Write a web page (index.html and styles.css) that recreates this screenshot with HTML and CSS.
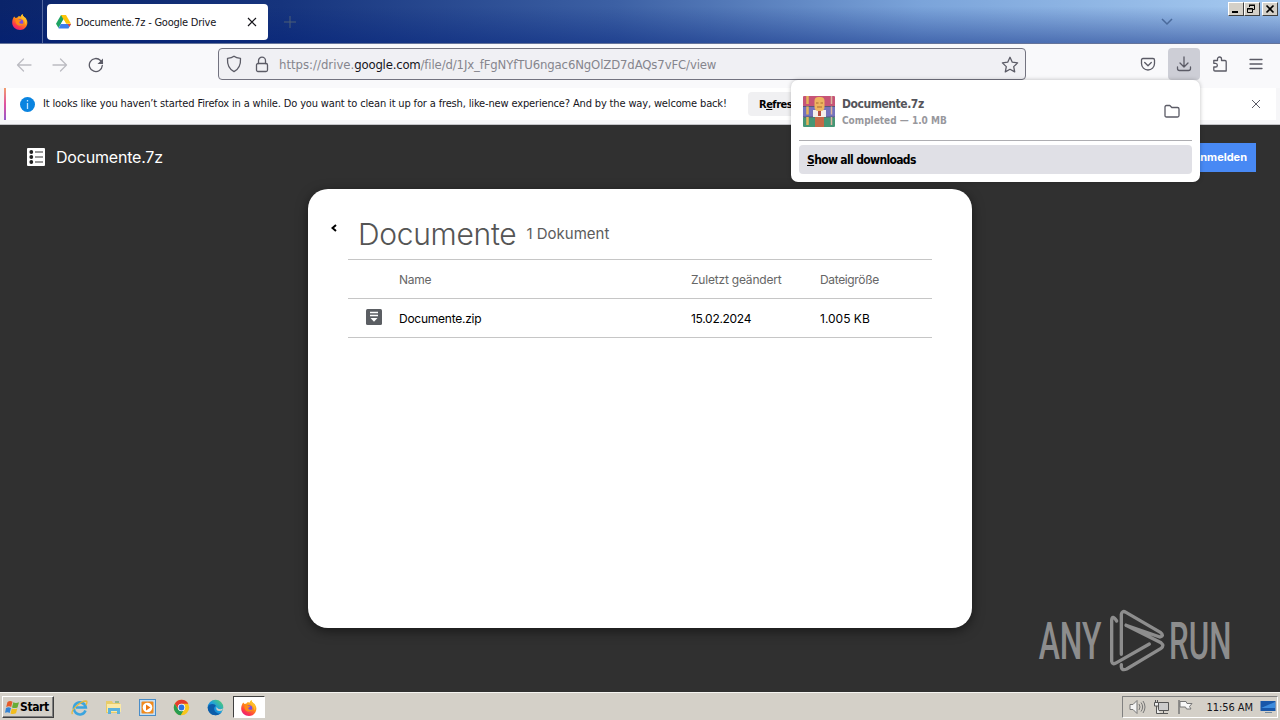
FILE: index.html
```html
<!DOCTYPE html>
<html lang="en">
<head>
  <meta charset="UTF-8" />
  <meta name="viewport" content="width=device-width, initial-scale=1.0">
  <title>Documente.7z - Google Drive</title>
  <link rel="stylesheet" href="styles.css">
</head>
<body>

  <!-- shared gradients and the firefox logo -->
  <svg class="defs" width="0" height="0">
    <defs>
      <linearGradient id="fox" x1="0.8" y1="0" x2="0.2" y2="1">
        <stop offset="0" stop-color="#ffe226" />
        <stop offset="0.45" stop-color="#ff8a16" />
        <stop offset="0.75" stop-color="#ff3b47" />
        <stop offset="1" stop-color="#e31587" />
      </linearGradient>
      <linearGradient id="edge" x1="0" y1="1" x2="1" y2="0">
        <stop offset="0" stop-color="#0c59a4" />
        <stop offset="0.5" stop-color="#1b9de2" />
        <stop offset="1" stop-color="#5bd65b" />
      </linearGradient>
      <symbol id="firefox" viewBox="0 0 16 16">
        <path fill="url(#fox)" d="M2.2 2.6 3.6 4 5.4 3.4C6.4 2.6 7 1.8 7.4 2.2L8.4 2.8C8.8 1.6 9.6.7 10.4 0c.2 1.7 1.2 2.3 2 3.2 1 .4 1.6 1 2 2 1.400 2.500 1.300 5-.1 7.200C12.800 14.700 10.600 16 8 16 3.800 16 .4 13 .2 9 .1 6.500 1 4.100 2.200 2.600z" />
        <path fill="#ffbd2e" d="M10.400 0c.2 1.700 1.200 2.300 2 3.200 2 2 2.400 5.400.8 7.500.2-3-.8-5.300-3.700-7C9.300 2.400 9.600 1 10.400 0z" />
        <circle cx="8" cy="8.600" r="3.300" fill="#7a4ce0" />
        <path fill="#ff8a16" d="M3.600 5.200c1.700-.7 3 .1 4.100.9l1.700.2c-.4 1-1.600 1-2.100 1.700-.2.800.6 1.800 2 1.700 1.200 0 2-.5 2.500-.2-1 2.600-5 3-7 .9C3.600 9 3.100 6.700 3.600 5.200z" />
      </symbol>
    </defs>
  </svg>

  <header class="titlebar">
    <div class="pinned">
      <svg width="16" height="16"><use href="#firefox" /></svg>
    </div>
    <div class="tab">
      <svg width="15" height="14" viewBox="0 0 15 14">
        <path fill="#1ea362" d="M5 0h5L2.500 13 0 8.700z" />
        <path fill="#fdc40a" d="M5 0h5l5 8.700h-5z" />
        <path fill="#3b7ded" d="M4.800 9H15l-2.500 4.600h-10z" />
        <path fill="#ea4335" d="M11.500 9H15l-1.500 2.700z" />
        <path fill="#fff" d="m7.500 4.500 2.500 4.300H5z" />
      </svg>
      <span class="tab-title">Documente.7z - Google Drive</span>
      <svg class="tab-close" width="10" height="10" viewBox="0 0 10 10"><path d="m1 1 8 8M9 1 1 9" /></svg>
    </div>
    <svg class="new-tab" width="12" height="12" viewBox="0 0 12 12"><path d="M6 0v12M0 6h12" /></svg>
    <svg class="list-tabs" width="12" height="8" viewBox="0 0 12 8"><path d="m1 1 5 5 5-5" /></svg>
    <div class="window-buttons">
      <button><svg width="12" height="10" viewBox="0 0 12 10"><path d="M2 8h6" stroke="#000" stroke-width="2" /></svg></button>
      <button><svg width="12" height="10" viewBox="0 0 12 10"><path d="M3.500 3V1.500h5v4H7M3.500 1.500h5M1.500 4.500h5v4h-5zM1 5h6M3 1h6" fill="none" stroke="#000" /></svg></button>
      <button class="win-close"><svg width="12" height="10" viewBox="0 0 12 10"><path d="m2.500 1.500 7 7m0-7-7 7" stroke="#000" stroke-width="1.700" /></svg></button>
    </div>
  </header>

  <nav class="toolbar">
    <svg class="nav-icon faded back" width="16" height="16" viewBox="0 0 16 16"><path d="M15 8H1.500M7.500 2l-6 6 6 6" /></svg>
    <svg class="nav-icon faded forward" width="16" height="16" viewBox="0 0 16 16"><path d="M1 8h13.500M8.500 2l6 6-6 6" /></svg>
    <svg class="nav-icon reload" width="16" height="16" viewBox="0 0 16 16"><path d="M14.300 8.500A6.500 6.500 0 1 1 12.500 3.500L14.500 6" /><path class="solid" d="M15 1.500V7H9.500z" /></svg>
    <div class="urlbar">
      <svg class="nav-icon" width="16" height="18" viewBox="0 0 16 18"><path d="M8 1.200C6.500 2.500 4 3.200 1.500 3.400c-.3 5 .6 10.300 6.500 13.200 5.900-2.900 6.800-8.200 6.500-13.200C12 3.200 9.500 2.500 8 1.200z" /></svg>
      <svg class="nav-icon lock" width="14" height="17" viewBox="0 0 14 17"><rect x="1.500" y="7.500" width="11" height="8" rx="1.500" /><path d="M3.500 7.500V4.700a3.500 3.500 0 0 1 7 0v2.800" /></svg>
      <span class="url"><span class="u1">https://drive.</span><b>google.com</b><span class="u2">/file/d/1Jx_fFgNYfTU6ngac6NgOlZD7dAQs7vFC/view</span></span>
      <svg class="nav-icon star" width="18" height="17" viewBox="0 0 18 17"><path d="m9 1.300 2.300 4.900 5.300.7-3.900 3.700 1 5.300L9 13.300l-4.700 2.600 1-5.300L1.400 6.900l5.300-.7z" /></svg>
    </div>
    <div class="tools">
      <svg class="nav-icon pocket" width="16" height="16" viewBox="0 0 16 16"><path d="M3 2.500h10c1 0 1.500.5 1.500 1.500v3.500a6.500 6.500 0 0 1-13 0V4c0-1 .5-1.500 1.500-1.500z" /><path d="M4.700 6.500 8 9.700l3.300-3.200" /></svg>
      <div class="downloads-button">
        <svg class="nav-icon" width="16" height="16" viewBox="0 0 16 16"><path d="M8 1v10M4 7l4 4 4-4M1.500 11v1.500q0 2 2 2h9q2 0 2-2V11" /></svg>
      </div>
      <svg class="nav-icon puzzle" width="16" height="16" viewBox="0 0 16 16"><path d="M5.500 4.500V3a2 2 0 0 1 4 0v1.500H13q1.200 0 1.200 1.200V15H3q-1.200 0-1.200-1.200V11h1.700a1.800 1.800 0 0 0 0-3.700H1.800V4.500z" /></svg>
      <svg class="nav-icon menu" width="14" height="12" viewBox="0 0 14 12"><path d="M1 1.500h12M1 6h12M1 10.500h12" /></svg>
    </div>
  </nav>

  <div class="notice-wrap">
    <div class="notice">
      <svg width="15" height="15" viewBox="0 0 15 15"><circle cx="7.500" cy="7.500" r="7.500" fill="#0a84e0" /><path d="M7.500 3v1.500M7.500 6v6" stroke="#bfe3ff" stroke-width="1.300" /></svg>
      <span class="notice-text">It looks like you haven’t started Firefox in a while. Do you want to clean it up for a fresh, like-new experience? And by the way, welcome back!</span>
      <button class="refresh">R<u>e</u>fresh Firefox…</button>
      <svg class="notice-close" width="10" height="10" viewBox="0 0 10 10"><path d="m1 1 8 8M9 1 1 9" /></svg>
    </div>
  </div>

  <main class="viewer">
    <div class="viewer-head">
      <svg width="18" height="18" viewBox="0 0 18 18">
        <rect width="18" height="18" rx="1" fill="#fff" />
        <g fill="#222"><circle cx="4.300" cy="4" r="1.900" /><circle cx="4.300" cy="9" r="1.900" /><circle cx="4.300" cy="14" r="1.900" /></g>
        <path d="M8 4h8M8 9h8M8 14h8" stroke="#777" stroke-width="1.500" />
      </svg>
      <span class="file-name">Documente.7z</span>
      <a class="login">Anmelden</a>
    </div>

    <section class="sheet">
      <div class="sheet-title">
        <svg class="sheet-back" width="6" height="8" viewBox="0 0 6 8"><path d="M5 1 1.500 4 5 7" /></svg>
        <h1>Documente</h1>
        <span class="count">1 Dokument</span>
      </div>
      <div class="row row-head">
        <span></span><span class="name">Name</span><span class="changed">Zuletzt geändert</span><span class="size">Dateigröße</span>
      </div>
      <div class="row">
        <svg class="zip-icon" width="16" height="16" viewBox="0 0 16 16"><rect width="16" height="16" rx="1.500" fill="#5b5e63" /><path d="M4 3.500h8M4 6.500h8" stroke="#fff" stroke-width="1.500" /><path d="M4.500 9h7L8 12.800z" fill="#fff" /></svg>
        <span class="name">Documente.zip</span><span class="changed">15.02.2024</span><span>1.005 KB</span>
      </div>
    </section>

    <svg class="watermark" width="230" height="80" viewBox="0 0 690 240">
      <text transform="translate(56 178) scale(0.62 1)">ANY</text>
      <text transform="translate(447 178) scale(0.61 1)">RUN</text>
      <path d="M290 63Q277 43 275 60V184Q277 196 290 188L388 132M304 163V43Q306 30 318 37L421 97Q434 107 420 111L318 76M304 194Q302 214 320 207L423 145Q434 137 423 128L318 76" />
    </svg>
  </main>

  <aside class="panel">
    <div class="download">
      <svg width="32" height="32" viewBox="0 0 32 32">
        <rect width="32" height="10.500" rx="1" fill="#c65476" />
        <rect y="10.500" width="32" height="10.500" fill="#7472bd" />
        <rect y="21" width="32" height="10" rx="1" fill="#469675" />
        <path d="M0 10.500h32M0 21h32" stroke="#555a78" />
        <path d="M4.500 0v31" stroke="#e5b45a" stroke-width="2.500" stroke-dasharray="8 2.500" />
        <path d="M28.500 0v31" stroke="#dcb5a0" stroke-width="1.500" stroke-dasharray="8 2.500" />
        <rect x="12" y="15" width="9" height="16" fill="#c66948" />
        <path d="M10 14h13v7H10z" fill="#f4eee9" />
        <rect x="11.500" y="1" width="10" height="14" rx="4" fill="#edb55f" />
        <path d="M13 7h2.500m2 0H20M14 11h5" stroke="#a96932" />
        <path d="M15 15h3v5h-3z" fill="#b64b40" />
      </svg>
      <div class="download-info">
        <div class="download-name">Documente.7z</div>
        <div class="download-status">Completed — 1.0 MB</div>
      </div>
      <svg class="nav-icon folder" width="16" height="14" viewBox="0 0 16 14"><path d="M2.500 1.500h3.300l2 2h5.700q1.500 0 1.500 1.500v6.500q0 1.500-1.500 1.500h-11Q1 13 1 11.500V3q0-1.500 1.500-1.500z" /></svg>
    </div>
    <button class="show-all"><span><u>S</u>how all downloads</span></button>
  </aside>

  <footer class="taskbar">
    <button class="start">
      <svg width="15" height="15" viewBox="0 0 15 15">
        <path fill="#e65b29" d="M2.500 2Q5 .2 7.500 1.700L6.200 7Q4 5.700 1.200 7z" />
        <path fill="#69ac35" d="M8.300 2.300q2.500 1.300 5.700 0L12.500 7.500q-3 1.200-5.500 0z" />
        <path fill="#3484d5" d="M1 8q2.500-1.500 5 0l-1.300 5Q2.500 11.500 0 12.800z" />
        <path fill="#f2bd1d" d="M6.800 8.400q2.700 1.300 5.500.1L11 13.300q-3 1.400-5.500.2z" />
      </svg>
      <span>Start</span>
    </button>
    <div class="quick">
      <svg width="17" height="17" viewBox="0 0 17 17">
        <path d="M14.500 11.500a6 6 0 1 1 .3-3H5" fill="none" stroke="#3ba4de" stroke-width="2.600" />
        <path d="M1.500 15C-1 12 9 2 15 2q2 .2 0 4" fill="none" stroke="#e7b93d" stroke-width="1.300" />
      </svg>
      <svg width="17" height="17" viewBox="0 0 17 17">
        <path fill="#e8cc69" d="M1 2h6l1 2h7v10H1z" />
        <path fill="#fae9a6" d="M2 5h14v8H2z" />
        <path fill="#5cb2dc" d="M3 9h12v6h-3v-3H6v3H3z" />
        <path stroke="#55a25b" d="M10 3h4" />
      </svg>
      <svg width="17" height="17" viewBox="0 0 17 17">
        <rect x=".5" y=".5" width="16" height="16" fill="#c4dff5" stroke="#4a8dc8" />
        <rect x="2.500" y="2.500" width="12" height="12" rx="1" fill="#f18a1c" />
        <circle cx="8.500" cy="8.500" r="4.800" fill="#fff" /><path fill="#ed7710" d="m7 5.500 4.500 3L7 11.500z" />
      </svg>
      <svg width="17" height="17" viewBox="0 0 17 17">
        <circle cx="8.500" cy="8.500" r="7.700" fill="#f8c51c" />
        <path fill="#e43b2e" d="M1.800 4.700a7.700 7.700 0 0 1 13.500 0H8.500L5 10z" />
        <path fill="#279c50" d="M1.800 4.700 5.200 10.500l5 1.500-2.500 4.200A7.700 7.700 0 0 1 1.800 4.700z" />
        <circle cx="8.500" cy="8.500" r="3.700" fill="#fff" /><circle cx="8.500" cy="8.500" r="2.900" fill="#2d73df" />
      </svg>
      <svg width="17" height="17" viewBox="0 0 17 17">
        <circle cx="8.500" cy="8.500" r="7.800" fill="url(#edge)" />
        <path fill="#0c5ca9" d="M.7 8.500C2 4 8 4 9 7c-3 1-2.500 6 2 7.500q2 .5 4-1.500C12 18 1 17.500.7 8.500z" />
        <path fill="#d6d2ca" d="M9.500 8q2 3.500 6.500 1.500-.5 2.500-3.500 2.500-4 0-3-4z" />
      </svg>
    </div>
    <div class="task-active"><svg width="16" height="16"><use href="#firefox" /></svg></div>
    <div class="tray">
      <svg width="17" height="16" viewBox="0 0 17 16"><path d="M1 5.500h3l4-4v13l-4-4H1z" fill="#f4f4f4" stroke="#777" /><path d="M10 5q2 3 0 6M12 3.500q3.300 4.500 0 9M14 2q4 6 0 12" fill="none" stroke="#777" /></svg>
      <svg width="17" height="16" viewBox="0 0 17 16"><path d="M5.500 3.500h10v8h-10z" fill="#ccc" stroke="#555" /><path d="M6 14.500h9M10.500 12v2" stroke="#555" /><path d="M1.500 3.500h4V7h-4zM2.500 1v2m2-2v2m-1 4v7.500H7" fill="#eee" stroke="#555" /></svg>
      <svg width="17" height="16" viewBox="0 0 17 16"><path d="M2 1v14" stroke="#777" stroke-width="1.500" /><path d="M3 2.500h6l1 2h5l-2.500 3L14 10H9.500l-1-2H3z" fill="#f8f8f8" stroke="#777" /></svg>
      <span class="clock">11:56 AM</span>
      <svg width="16" height="14" viewBox="0 0 16 14"><rect width="15" height="10" x=".5" y="1" fill="#1857a9" /><path d="M1 8 15 2v6z" fill="#3d8cdd" /><path d="M5 12.500h7" stroke="#71899e" /></svg>
    </div>
  </footer>

</body>
</html>
```
FILE: styles.css
```css
* {
  box-sizing: border-box;
}

body {
  margin: 0;
  width: 1280px;
  height: 720px;
  overflow: hidden;
  display: flex;
  flex-direction: column;
  position: relative;
  font-family: "DejaVu Sans Condensed", "DejaVu Sans", sans-serif;
  font-size: 11px;
  color: #15141a;
}

svg {
  flex-shrink: 0;
}

button {
  font-family: inherit;
  color: #000;
  border: none;
  padding: 0;
}

span {
  white-space: nowrap;
}

.defs {
  position: absolute;
}

/* title bar */
.titlebar {
  display: flex;
  height: 44px;
  flex-shrink: 0;
  background:
    linear-gradient(to bottom, rgba(0, 30, 110, 0) 15%, rgba(0, 30, 120, 0.45)),
    linear-gradient(to right, #0a246a 0, #16347d 22%, #3c60a4 48%, #7ba4da 72%, #a6caf0 100%);
  border-bottom: 1px solid #65749a;
}

.pinned {
  width: 43px;
  padding: 14px 0 0 12px;
  border-right: 1px solid #5469a0;
}

.tab {
  display: flex;
  align-items: center;
  width: 221px;
  height: 36px;
  margin: 4px 0 0 4px;
  padding: 0 11px 0 9px;
  background: #fff;
  border-radius: 4px;
}

.tab-title {
  margin: 1px 0 0 5px;
  letter-spacing: -0.23px;
}

.tab-close {
  margin-left: auto;
}

.tab-close path,
.notice-close path {
  stroke: #15141a;
  stroke-width: 1.2;
}

.notice-close path {
  stroke: #5b5b66;
  stroke-width: 1;
}

.new-tab {
  margin: 16px 0 0 16px;
}

.new-tab path {
  stroke: #4d5e76;
}

.list-tabs {
  margin: 18px 55px 0 auto;
}

.list-tabs path {
  fill: none;
  stroke: #4a6a9b;
  stroke-width: 1.5;
}

.window-buttons {
  display: flex;
  padding: 2px 2px 0 0;
}

.window-buttons button {
  display: flex;
  width: 16px;
  height: 14px;
  padding: 1px;
  background: #d4d0c8;
  border: 1px solid;
  border-color: #fff #404040 #404040 #fff;
}

.window-buttons .win-close {
  margin-left: 2px;
}

/* navigation */
.toolbar {
  display: flex;
  height: 44px;
  flex-shrink: 0;
  background: #f9f9fb;
  padding: 4px 16px 0;
}

.nav-icon {
  fill: none;
  stroke: #5b5b66;
  stroke-width: 1.3;
  stroke-linecap: round;
  stroke-linejoin: round;
}

.nav-icon .solid {
  fill: #5b5b66;
  stroke: none;
}

.faded {
  stroke: #bcbcc2;
}

.back,
.forward,
.reload {
  margin-top: 9px;
}

.forward,
.reload {
  margin-left: 20px;
}

.urlbar {
  display: flex;
  align-items: center;
  width: 808px;
  height: 32px;
  margin-left: 114px;
  padding: 0 6px 0 7px;
  background: #f0f0f4;
  border: 1px solid #737380;
  border-radius: 4px;
}

.lock {
  margin-left: 13px;
}

.url {
  margin-left: 10px;
  font-size: 13px;
  color: #85858d;
}

.url b {
  font-weight: normal;
  letter-spacing: -0.2px;
  color: #15141a;
}

.u1 {
  letter-spacing: 0;
}

.u2 {
  letter-spacing: -0.13px;
}

.star {
  margin-left: auto;
}

.tools {
  display: flex;
  margin-left: auto;
}

.pocket {
  margin: 8px 12px 0 0;
}

.downloads-button {
  width: 32px;
  height: 32px;
  padding: 8px;
  background: #cdced6;
  border-radius: 4px;
}

.puzzle {
  margin: 8px 14px 0 12px;
}

.menu {
  margin: 10px 1px 0 7px;
}

/* notification */
.notice-wrap {
  height: 37px;
  flex-shrink: 0;
  padding: 0 4px;
  background: #f6f6f8;
  border-bottom: 1px solid #c4c4c8;
}

.notice {
  display: flex;
  align-items: center;
  height: 32px;
  padding: 0 15px 0 14px;
  background: #fff;
  border-left: 2px solid;
  border-image: linear-gradient(#f3a36a, #e052a0, #9059ce) 1;
}

.notice-text {
  width: 684px;
  margin: -1px 0 0 8px;
  letter-spacing: -0.15px;
}

.refresh {
  width: 116px;
  height: 24px;
  margin-left: 21px;
  padding: 0 11px;
  background: #f0f0f2;
  border-radius: 4px;
  font-size: 11px;
  font-weight: bold;
  letter-spacing: -0.5px;
  text-align: left;
}

.notice-close {
  margin-left: auto;
}

/* drive viewer */
.viewer {
  flex: 1;
  position: relative;
  background: #303030;
  font-family: Inter, sans-serif;
}

.viewer-head {
  display: flex;
  align-items: center;
  height: 64px;
  padding: 0 24px 0 27px;
}

.file-name {
  margin-left: 11px;
  font-size: 16px;
  letter-spacing: -0.2px;
  color: #fff;
}

.login {
  width: 86px;
  height: 29px;
  margin-left: auto;
  padding-right: 9px;
  background: #4889f4;
  color: #fff;
  font-size: 11px;
  font-weight: bold;
  line-height: 29px;
  text-align: right;
}

.sheet {
  width: 664px;
  height: 439px;
  margin: 0 auto;
  padding: 0 40px;
  background: #fff;
  border-radius: 20px;
  box-shadow: 0 3px 12px rgba(0, 0, 0, 0.5);
}

.sheet-title {
  display: flex;
  height: 71px;
  border-bottom: 1px solid #c6c6c6;
}

.sheet-back {
  margin: 35px 21px 0 -17px;
}

.sheet-back path {
  fill: none;
  stroke: #000;
  stroke-width: 2;
}

.sheet-title h1 {
  margin: 26px 0 0;
  font-size: 30px;
  font-weight: 300;
  line-height: 38px;
  letter-spacing: -0.3px;
  color: #555;
}

.count {
  margin: 35px 0 0 10px;
  font-size: 15px;
  line-height: 20px;
  color: #5c5c5c;
}

.row {
  display: grid;
  grid-template-columns: 33px 292px 129px 1fr;
  align-items: center;
  height: 39px;
  padding-left: 18px;
  border-bottom: 1px solid #c6c6c6;
  font-size: 12px;
  color: #000;
}

.row-head {
  color: #666;
}

.zip-icon {
  margin-top: -2px;
}

.name {
  letter-spacing: -0.25px;
}

.changed {
  letter-spacing: -0.3px;
}

.row-head .changed {
  letter-spacing: -0.2px;
}

.size {
  letter-spacing: -0.35px;
}

.watermark {
  position: absolute;
  left: 1020px;
  top: 475px;
}

.watermark text {
  font-family: Roboto, sans-serif;
  font-size: 154px;
  font-weight: 500;
  fill: #8d8d8d;
}

.watermark path {
  fill: none;
  stroke: #8d8d8d;
  stroke-width: 10;
  stroke-linecap: round;
}

/* downloads popup */
.panel {
  position: absolute;
  left: 791px;
  top: 80px;
  width: 409px;
  height: 102px;
  padding: 8px;
  background: #fff;
  border-radius: 7px;
  box-shadow: 0 0 4px rgba(0, 0, 0, 0.25);
}

.download {
  display: flex;
  height: 53px;
  padding: 8px 12px 0 4px;
  border-bottom: 1px solid #aeaeb2;
}

.download-info {
  margin-left: 7px;
  font-weight: bold;
}

.download-name {
  font-size: 12px;
  line-height: 17px;
  color: #55555b;
  letter-spacing: -0.45px;
}

.download-status {
  font-size: 10px;
  line-height: 16px;
  color: #98989d;
}

.folder {
  margin: 8px 0 0 auto;
}

.show-all {
  display: block;
  width: 393px;
  height: 29px;
  margin-top: 4px;
  padding-left: 8px;
  background: #e0e0e6;
  border-radius: 4px;
  font-size: 12px;
  font-weight: bold;
  letter-spacing: -0.65px;
  text-align: left;
}

/* taskbar */
.taskbar {
  display: flex;
  height: 28px;
  flex-shrink: 0;
  background: #d4d0c8;
  border-top: 1px solid #f5f4f0;
  padding: 3px 2px 0;
}

.start {
  display: flex;
  align-items: center;
  width: 52px;
  height: 22px;
  padding-left: 2px;
  background: #d4d0c8;
  border: 1px solid;
  border-color: #fff #404040 #404040 #fff;
  box-shadow: inset -1px -1px #808080;
  font-size: 12px;
  font-weight: bold;
  letter-spacing: -0.4px;
}

.quick {
  display: flex;
  gap: 17px;
  margin: 3px 0 0 17px;
}

.task-active {
  width: 32px;
  height: 22px;
  margin-left: 9px;
  padding: 3px 7px;
  background: #fff;
  border: 1px solid;
  border-color: #404040 #fff #fff #404040;
}

.tray {
  display: flex;
  align-items: center;
  width: 156px;
  height: 22px;
  margin-left: auto;
  padding: 0 1px 0 6px;
  gap: 7px;
  border: 1px solid;
  border-color: #808080 #fff #fff #808080;
}

.clock {
  margin-left: auto;
  letter-spacing: -0.05px;
}
```
